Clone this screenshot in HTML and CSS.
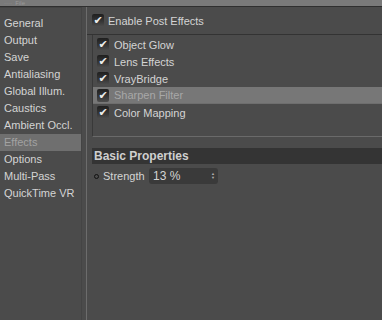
FILE: index.html
```html
<!DOCTYPE html>
<html lang="en">

<head>
    <meta charset="UTF-8">
    <title>Render Settings</title>
    <link rel="stylesheet" href="styles.css">
</head>

<body>
    <div class="menubar"><span>&middot;&middot;&middot;&middot;&nbsp; File</span></div>
    <div class="main">
        <ul class="sidebar">
            <li>General</li>
            <li>Output</li>
            <li>Save</li>
            <li>Antialiasing</li>
            <li>Global Illum.</li>
            <li>Caustics</li>
            <li>Ambient Occl.</li>
            <li class="active">Effects</li>
            <li>Options</li>
            <li>Multi-Pass</li>
            <li>QuickTime VR</li>
        </ul>
        <div class="content">
            <div class="enable-row">
                <span class="check">&#10004;</span>
                <span>Enable Post Effects</span>
            </div>
            <div class="effects-wrap">
                <ul class="effects">
                    <li><span class="check">&#10004;</span>Object Glow</li>
                    <li><span class="check">&#10004;</span>Lens Effects</li>
                    <li><span class="check">&#10004;</span>VrayBridge</li>
                    <li class="selected"><span class="check">&#10004;</span>Sharpen Filter</li>
                    <li><span class="check">&#10004;</span>Color Mapping</li>
                </ul>
            </div>
            <div class="props">
                <div class="props-title">Basic Properties</div>
                <div class="prop-row">
                    <span class="dot"></span>
                    <span class="prop-label">Strength</span>
                    <div class="field">
                        <span>13 %</span>
                        <span class="spin">&#9650;<br>&#9660;</span>
                    </div>
                </div>
            </div>
        </div>
    </div>
</body>

</html>
```

FILE: styles.css
```css
body {
    margin: 0;
    background-color: #4b4b4b;
    color: #d4d4d4;
    font-family: "Liberation Sans", Arial, sans-serif;
    font-size: 11px;
    height: 320px;
    overflow: hidden;
}

.menubar {
    height: 6px;
    background-color: #7a7a7a;
    border-bottom: 1px solid #2f2f2f;
    overflow: hidden;
    color: #999;
    font-size: 6px;
    line-height: 6px;
    padding-left: 4px;
}

.main {
    display: flex;
    height: 313px;
}

.sidebar {
    list-style: none;
    margin: 0;
    padding: 7px 0 0 0;
    width: 81px;
    border-right: 1px solid #444;
    border-top: 1px solid #434343;
}

.sidebar li {
    height: 17px;
    line-height: 17px;
    padding-left: 4px;
}

.sidebar li.active {
    background-color: #6f6f6f;
    color: #a2a2a2;
}

.content {
    flex: 1;
    margin-left: 4px;
    border-left: 1px solid #6c6c6c;
}

.enable-row {
    display: flex;
    align-items: center;
    height: 27px;
    padding-left: 5px;
    border-bottom: 1px solid #333;
}

.enable-row .check {
    margin-right: 4px;
}

.check {
    display: inline-block;
    width: 12px;
    height: 13px;
    border-radius: 2px;
    background: linear-gradient(#1f1f1f, #353535 55%, #4e4e4e);
    color: #ececec;
    font-family: "DejaVu Sans", sans-serif;
    font-size: 11px;
    line-height: 13px;
    text-align: center;
}

.effects-wrap {
    margin-left: 5px;
    border-left: 1px solid #393939;
    border-bottom: 1px solid #6a6a6a;
    height: 101px;
}

.effects {
    list-style: none;
    margin: 0;
    padding: 1px 0 0 0;
}

.effects li {
    display: flex;
    align-items: center;
    height: 17px;
    padding-left: 4px;
}

.effects li .check {
    margin-right: 5px;
}

.effects li.selected {
    background-color: #777;
    color: #a8a8a8;
    border-bottom: 1px solid #6e6e6e;
    height: 16px;
}

.props {
    margin-top: 11px;
    margin-left: 5px;
}

.props-title {
    height: 16px;
    line-height: 16px;
    background-color: #343434;
    font-weight: bold;
    font-size: 12px;
    padding-left: 2px;
    color: #cfcfcf;
}

.prop-row {
    display: flex;
    align-items: center;
    height: 24px;
    padding-left: 2px;
}

.dot {
    width: 3px;
    height: 3px;
    border: 1px solid #111;
    border-radius: 50%;
    margin-right: 4px;
}

.prop-label {
    width: 46px;
}

.field {
    display: flex;
    align-items: center;
    justify-content: space-between;
    width: 62px;
    height: 16px;
    padding: 0 3px 0 4px;
    background-color: #3a3a3a;
    border-radius: 3px;
    font-size: 12px;
}

.spin {
    font-size: 4px;
    line-height: 4px;
    color: #b0b0b0;
}
```
